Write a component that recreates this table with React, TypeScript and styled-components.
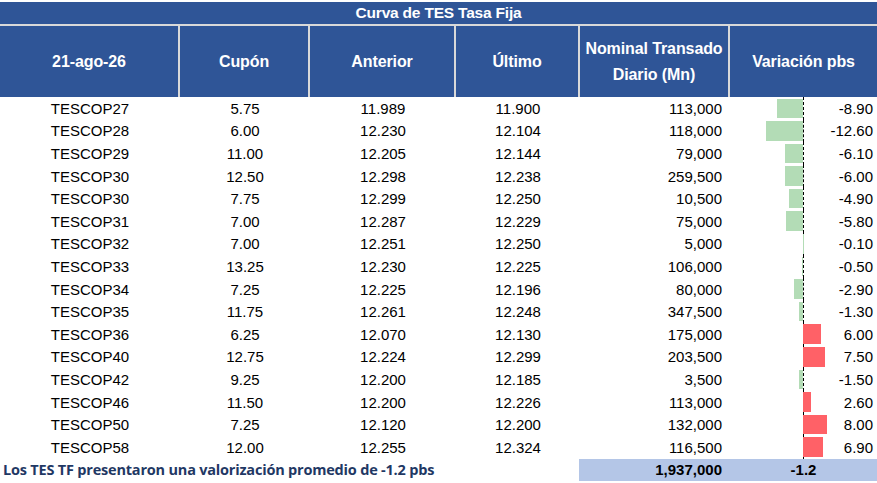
import styled, { createGlobalStyle } from "styled-components";

interface IBond {
  name: string;
  cupon: string;
  anterior: string;
  ultimo: string;
  nominal: string;
  variacion: number;
}

const bonds: IBond[] = [
  { name: "TESCOP27", cupon: "5.75", anterior: "11.989", ultimo: "11.900", nominal: "113,000", variacion: -8.9 },
  { name: "TESCOP28", cupon: "6.00", anterior: "12.230", ultimo: "12.104", nominal: "118,000", variacion: -12.6 },
  { name: "TESCOP29", cupon: "11.00", anterior: "12.205", ultimo: "12.144", nominal: "79,000", variacion: -6.1 },
  { name: "TESCOP30", cupon: "12.50", anterior: "12.298", ultimo: "12.238", nominal: "259,500", variacion: -6.0 },
  { name: "TESCOP30", cupon: "7.75", anterior: "12.299", ultimo: "12.250", nominal: "10,500", variacion: -4.9 },
  { name: "TESCOP31", cupon: "7.00", anterior: "12.287", ultimo: "12.229", nominal: "75,000", variacion: -5.8 },
  { name: "TESCOP32", cupon: "7.00", anterior: "12.251", ultimo: "12.250", nominal: "5,000", variacion: -0.1 },
  { name: "TESCOP33", cupon: "13.25", anterior: "12.230", ultimo: "12.225", nominal: "106,000", variacion: -0.5 },
  { name: "TESCOP34", cupon: "7.25", anterior: "12.225", ultimo: "12.196", nominal: "80,000", variacion: -2.9 },
  { name: "TESCOP35", cupon: "11.75", anterior: "12.261", ultimo: "12.248", nominal: "347,500", variacion: -1.3 },
  { name: "TESCOP36", cupon: "6.25", anterior: "12.070", ultimo: "12.130", nominal: "175,000", variacion: 6.0 },
  { name: "TESCOP40", cupon: "12.75", anterior: "12.224", ultimo: "12.299", nominal: "203,500", variacion: 7.5 },
  { name: "TESCOP42", cupon: "9.25", anterior: "12.200", ultimo: "12.185", nominal: "3,500", variacion: -1.5 },
  { name: "TESCOP46", cupon: "11.50", anterior: "12.200", ultimo: "12.226", nominal: "113,000", variacion: 2.6 },
  { name: "TESCOP50", cupon: "7.25", anterior: "12.120", ultimo: "12.200", nominal: "132,000", variacion: 8.0 },
  { name: "TESCOP58", cupon: "12.00", anterior: "12.255", ultimo: "12.324", nominal: "116,500", variacion: 6.9 },
];

const BAR_SCALE = 2.95;
const AXIS_X = 73;
const COLUMNS = "180px 130px 146px 124px 150px 147px";

const App = () => {
  return (
    <>
      <GlobalStyle />
      <Sheet>
        <TitleBar>Curva de TES Tasa Fija</TitleBar>
        <HeaderRow>
          <HeaderCell>21-ago-26</HeaderCell>
          <HeaderCell>Cupón</HeaderCell>
          <HeaderCell>Anterior</HeaderCell>
          <HeaderCell>Último</HeaderCell>
          <HeaderCell $twoLines>
            Nominal Transado
            <br />
            Diario (Mn)
          </HeaderCell>
          <HeaderCell $last>Variación pbs</HeaderCell>
        </HeaderRow>

        {bonds.map((b, i) => {
          const w = Math.abs(b.variacion) * BAR_SCALE;
          return (
            <Row key={`${b.name}${i}`}>
              <Cell>{b.name}</Cell>
              <Cell>{b.cupon}</Cell>
              <Cell>{b.anterior}</Cell>
              <Cell>{b.ultimo}</Cell>
              <Cell $align="right">{b.nominal}</Cell>
              <VarCell>
                <Axis />
                <Bar
                  $positive={b.variacion > 0}
                  style={{ left: b.variacion > 0 ? AXIS_X : AXIS_X - w, width: w }}
                />
                <VarValue>{b.variacion.toFixed(2)}</VarValue>
              </VarCell>
            </Row>
          );
        })}

        <FooterRow>
          <FooterNote>Los TES TF presentaron una valorización promedio de -1.2 pbs</FooterNote>
          <TotalCell $align="right">1,937,000</TotalCell>
          <TotalCell $align="center">-1.2</TotalCell>
        </FooterRow>
      </Sheet>
    </>
  );
};
export default App;

const GlobalStyle = createGlobalStyle`
  html, body {
    margin: 0;
    padding: 0;
    background: #ffffff;
  }
  body {
    font-family: "Liberation Sans", Arial, sans-serif;
  }
`;

const Sheet = styled.div`
  width: 877px;
  padding-top: 2px;
`;

const TitleBar = styled.div`
  height: 22px;
  background: #2f5597;
  color: #ffffff;
  font-weight: bold;
  font-size: 15.5px;
  letter-spacing: -0.2px;
  display: flex;
  align-items: center;
  justify-content: center;
  border-bottom: 2px solid #d9d9d9;
`;

const HeaderRow = styled.div`
  display: grid;
  grid-template-columns: ${COLUMNS};
  height: 71px;
  background: #2f5597;
`;

const HeaderCell = styled.div<{ $twoLines?: boolean; $last?: boolean }>`
  display: flex;
  align-items: center;
  justify-content: center;
  text-align: center;
  color: #ffffff;
  font-weight: bold;
  font-size: 16px;
  letter-spacing: -0.1px;
  line-height: ${(p) => (p.$twoLines ? "26px" : "normal")};
  border-right: ${(p) => (p.$last ? "none" : "2px solid #d9d9d9")};
`;

const Row = styled.div`
  display: grid;
  grid-template-columns: ${COLUMNS};
  height: 22.6px;
  font-size: 15px;
  color: #000000;
`;

const Cell = styled.div<{ $align?: "center" | "right" }>`
  display: flex;
  align-items: center;
  justify-content: ${(p) => (p.$align === "right" ? "flex-end" : "center")};
  padding-right: ${(p) => (p.$align === "right" ? "8px" : "0")};
  white-space: nowrap;
`;

const VarCell = styled.div`
  position: relative;
  display: flex;
  align-items: center;
  justify-content: flex-end;
  padding-right: 4px;
`;

const Axis = styled.div`
  position: absolute;
  left: ${AXIS_X}px;
  top: 0;
  bottom: 0;
  border-left: 1px dashed #000000;
`;

const Bar = styled.div<{ $positive: boolean }>`
  position: absolute;
  top: 1.5px;
  bottom: 1.5px;
  background: ${(p) => (p.$positive ? "#ff6167" : "#b3dcb6")};
`;

const VarValue = styled.span`
  position: relative;
`;

const FooterRow = styled.div`
  display: grid;
  grid-template-columns: 579px 151px 147px;
  height: 22px;
`;

const FooterNote = styled.div`
  display: flex;
  align-items: center;
  padding-left: 3px;
  font-family: "Open Sans", "Liberation Sans", sans-serif;
  font-weight: bold;
  font-size: 14.5px;
  letter-spacing: -0.2px;
  color: #1f3864;
  white-space: nowrap;
`;

const TotalCell = styled.div<{ $align: "center" | "right" }>`
  display: flex;
  align-items: center;
  justify-content: ${(p) => (p.$align === "right" ? "flex-end" : "center")};
  padding-right: ${(p) => (p.$align === "right" ? "8px" : "0")};
  background: #b4c6e7;
  font-weight: bold;
  font-size: 15px;
  color: #000000;
`;
